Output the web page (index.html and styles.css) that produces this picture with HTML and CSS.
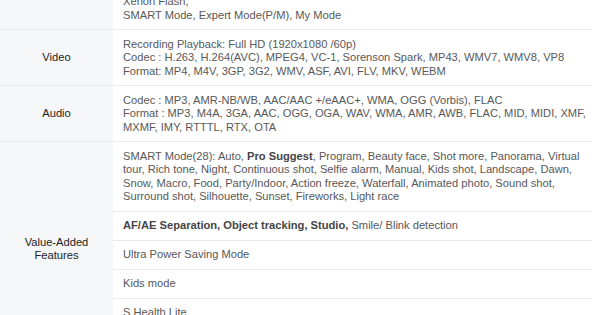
FILE: index.html
```html
<!DOCTYPE html>
<html>
<head>
<meta charset="utf-8">
<link rel="stylesheet" href="styles.css">
</head>
<body>
<table class="spec">
  <tr>
    <th class="label"></th>
    <td class="value">Xenon Flash,<br>SMART Mode, Expert Mode(P/M), My Mode</td>
  </tr>
  <tr>
    <th class="label">Video</th>
    <td class="value">Recording Playback: Full HD (1920x1080 /60p)<br>Codec : H.263, H.264(AVC), MPEG4, VC-1, Sorenson Spark, MP43, WMV7, WMV8, VP8<br>Format: MP4, M4V, 3GP, 3G2, WMV, ASF, AVI, FLV, MKV, WEBM</td>
  </tr>
  <tr>
    <th class="label">Audio</th>
    <td class="value">Codec : MP3, AMR-NB/WB, AAC/AAC +/eAAC+, WMA, OGG (Vorbis), FLAC<br>Format : MP3, M4A, 3GA, AAC, OGG, OGA, WAV, WMA, AMR, AWB, FLAC, MID, MIDI, XMF, MXMF, IMY, RTTTL, RTX, OTA</td>
  </tr>
  <tr>
    <th class="label" rowspan="6">Value-Added<br>Features</th>
    <td class="value">SMART Mode(28): Auto, <b>Pro Suggest</b>, Program, Beauty face, Shot more, Panorama, Virtual tour, Rich tone, Night, Continuous shot, Selfie alarm, Manual, Kids shot, Landscape, Dawn, Snow, Macro, Food, Party/Indoor, Action freeze, Waterfall, Animated photo, Sound shot, Surround shot, Silhouette, Sunset, Fireworks, Light race</td>
  </tr>
  <tr><td class="value"><b>AF/AE Separation, Object tracking, Studio,</b> Smile/ Blink detection</td></tr>
  <tr><td class="value">Ultra Power Saving Mode</td></tr>
  <tr><td class="value">Kids mode</td></tr>
  <tr><td class="value">S Health Lite</td></tr>
  <tr><td class="value">&nbsp;</td></tr>
</table>
</body>
</html>
```

FILE: styles.css
```css
html, body {
  margin: 0;
  padding: 0;
  background: #ffffff;
}

body {
  font-family: "Liberation Sans", Arial, Helvetica, sans-serif;
  font-size: 11.15px;
  line-height: 13.5px;
  overflow: hidden;
}

.spec {
  border-collapse: collapse;
  width: 592px;
  margin-top: -12.5px;
  table-layout: fixed;
}

.label {
  width: 113px;
  box-sizing: border-box;
  background: #f6f7f8;
  color: #222222;
  font-weight: normal;
  text-align: center;
  vertical-align: middle;
  padding: 7.5px 6px 7px;
  border-bottom: 1px solid #e8e9ea;
}

.value {
  color: #585858;
  text-align: left;
  vertical-align: top;
  padding: 7.5px 2px 7px 10px;
  border-bottom: 1px solid #e8e9ea;
}

.value b {
  color: #444444;
  font-weight: bold;
}
```
